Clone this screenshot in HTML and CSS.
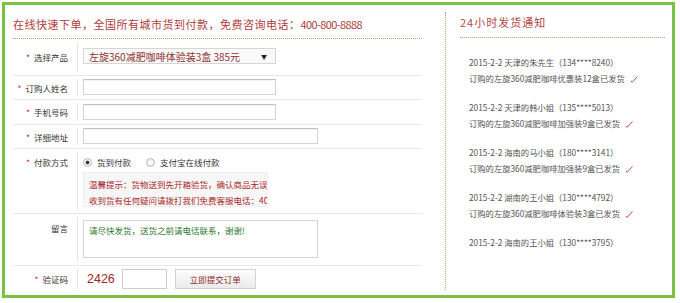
FILE: index.html
```html
<!DOCTYPE html>
<html lang="zh-CN">

<head>
    <meta charset="UTF-8">
    <meta name="viewport" content="width=device-width, initial-scale=1.0">
    <title>在线订购</title>
    <link rel="stylesheet" href="styles.css">
</head>

<body>
    <div class="box">
        <div class="main">
            <div class="main-head">在线快速下单，全国所有城市货到付款，免费咨询电话：<span class="tel">400-800-8888</span></div>
            <form class="order">
                <div class="row">
                    <label class="row-label"><em>*</em>选择产品</label>
                    <div class="field f-select">
                        <div class="select">
                            <span>左旋360减肥咖啡体验装3盒 385元</span>
                            <span class="arrow">▼</span>
                        </div>
                    </div>
                </div>
                <div class="row">
                    <label class="row-label" for="name"><em>*</em>订购人姓名</label>
                    <div class="field f-small">
                        <input type="text" id="name" class="text">
                    </div>
                </div>
                <div class="row">
                    <label class="row-label" for="mobile"><em>*</em>手机号码</label>
                    <div class="field f-mid">
                        <input type="tel" id="mobile" class="text">
                    </div>
                </div>
                <div class="row">
                    <label class="row-label" for="address"><em>*</em>详细地址</label>
                    <div class="field f-small">
                        <input type="text" id="address" class="text wide">
                    </div>
                </div>
                <div class="row row-pay">
                    <label class="row-label"><em>*</em>付款方式</label>
                    <div class="field f-pay">
                        <div class="pay">
                            <input type="radio" class="radio" name="pay" id="cod" checked>
                            <label for="cod">货到付款</label>
                            <input type="radio" class="radio second" name="pay" id="alipay">
                            <label for="alipay">支付宝在线付款</label>
                        </div>
                        <div class="tip">
                            温馨提示：货物送到先开箱验货，确认商品无误后再付款<br>
                            收到货有任何疑问请拨打我们免费客服电话：400-800-8888
                        </div>
                    </div>
                </div>
                <div class="row row-note">
                    <label class="row-label" for="note">留言</label>
                    <div class="field f-note">
                        <textarea id="note" class="note">请尽快发货，送货之前请电话联系，谢谢!</textarea>
                    </div>
                </div>
                <div class="row last">
                    <label class="row-label" for="code"><em>*</em>验证码</label>
                    <div class="field f-code">
                        <span class="code">2426</span>
                        <input type="text" id="code" class="code-input">
                        <button type="button" class="submit">立即提交订单</button>
                    </div>
                </div>
            </form>
        </div>

        <div class="side">
            <div class="side-head">24小时发货通知</div>
            <ul class="notice">
                <li>2015-2-2 天津的朱先生（134****8240）<br>订购的左旋360减肥咖啡优惠装12盒已发货<svg class="ok" width="8" height="7" viewBox="0 0 8 7"><polyline points="1,5 2.2,6.3 7.5,0.5" fill="none" stroke="#c9474a" stroke-width="1"/></svg></li>
                <li>2015-2-2 天津的韩小姐（135****5013）<br>订购的左旋360减肥咖啡加强装9盒已发货<svg class="ok" width="8" height="7" viewBox="0 0 8 7"><polyline points="1,5 2.2,6.3 7.5,0.5" fill="none" stroke="#c9474a" stroke-width="1"/></svg></li>
                <li>2015-2-2 海南的马小姐（180****3141）<br>订购的左旋360减肥咖啡加强装9盒已发货<svg class="ok" width="8" height="7" viewBox="0 0 8 7"><polyline points="1,5 2.2,6.3 7.5,0.5" fill="none" stroke="#c9474a" stroke-width="1"/></svg></li>
                <li>2015-2-2 湖南的王小姐（130****4792）<br>订购的左旋360减肥咖啡体验装3盒已发货<svg class="ok" width="8" height="7" viewBox="0 0 8 7"><polyline points="1,5 2.2,6.3 7.5,0.5" fill="none" stroke="#c9474a" stroke-width="1"/></svg></li>
                <li>2015-2-2 海南的王小姐（130****3795）</li>
            </ul>
        </div>
    </div>
</body>

</html>
```

FILE: styles.css
```css
* {
    box-sizing: border-box;
}

body {
    margin: 0;
    background-color: #fff;
    font-family: "Noto Sans CJK SC", sans-serif;
    color: #333;
}

.box {
    display: flex;
    width: 673px;
    height: 296px;
    margin: 2px 0 0 2px;
    border: 3px solid #7cc242;
}

/* left: order form */
.main {
    width: 440px;
    padding: 0 23px 0 8px;
}

.main-head {
    padding: 9px 0 4px;
    line-height: 20px;
    font-size: 11px;
    letter-spacing: 0.5px;
    color: #b03c3c;
    border-bottom: 1px dotted #a3a86b;
    white-space: nowrap;
}

.tel {
    letter-spacing: -0.6px;
}

.row {
    display: flex;
    border-bottom: 1px solid #e8e8e8;
}

.row.last {
    border-bottom: none;
}

.row-label {
    flex: 0 0 65px;
    display: flex;
    align-items: center;
    justify-content: flex-end;
    margin: 3px 0;
    padding-right: 9px;
    border-right: 1px solid #e3e3e3;
    font-size: 8.5px;
    line-height: 14px;
    white-space: nowrap;
}

.row-label em {
    font-style: normal;
    color: #d0363a;
    margin-right: 4px;
}

.row-pay .row-label {
    align-items: flex-start;
    padding-top: 3px;
}

.row-note .row-label {
    align-items: flex-start;
    padding-top: 4px;
}

.field {
    padding-left: 5px;
}

.f-select {
    padding-top: 9px;
    padding-bottom: 11px;
}

.f-small {
    padding-top: 3px;
    padding-bottom: 4px;
}

.f-mid {
    padding-top: 4px;
    padding-bottom: 4px;
}

.f-pay {
    padding-top: 6px;
    padding-bottom: 6px;
}

.f-note {
    padding-top: 6px;
    padding-bottom: 7px;
}

.f-code {
    display: flex;
    align-items: center;
    padding-top: 3px;
    padding-bottom: 3px;
}

.select {
    display: flex;
    align-items: center;
    justify-content: space-between;
    width: 193px;
    height: 16px;
    padding: 0 8px 0 5px;
    border: 1px solid #d6d6d6;
    background-color: #fafafa;
    font-size: 10px;
    color: #8e3434;
}

.select .arrow {
    font-size: 6px;
    color: #222;
}

.text {
    display: block;
    width: 193px;
    height: 16px;
    padding: 0 4px;
    border: 1px solid #d4d4d4;
    border-top-color: #c2c2c2;
    background-color: #fff;
    box-shadow: inset 0 1px 1px rgba(0, 0, 0, 0.05);
}

.text.wide {
    width: 235px;
}

.pay {
    display: flex;
    align-items: center;
    height: 14px;
    font-size: 8.5px;
}

.radio {
    appearance: none;
    width: 9px;
    height: 9px;
    margin: 0 5px 0 0;
    border: 1px solid #b9b9b9;
    border-radius: 50%;
    background: radial-gradient(circle, #fff 0, #e4e4e4 100%);
}

.radio:checked {
    background: radial-gradient(circle, #3a3a3a 0 1.6px, #f2f2f2 2.2px);
}

.radio.second {
    margin-left: 15px;
}

.tip {
    width: 185px;
    height: 35px;
    margin-top: 3px;
    padding: 3px 0 0 5px;
    border: 1px solid #efefef;
    background-color: #f7f7f7;
    overflow: hidden;
    white-space: nowrap;
    font-size: 8.5px;
    line-height: 16px;
    color: #a8282c;
}

.note {
    display: block;
    width: 235px;
    height: 38px;
    padding: 2px 5px;
    border: 1px solid #d4d4d4;
    resize: none;
    font-family: inherit;
    font-size: 8.5px;
    line-height: 14px;
    color: #2e7a31;
}

.code {
    margin-left: 4px;
    font-family: "Liberation Sans", Arial, sans-serif;
    font-size: 12.5px;
    color: #a3262a;
}

.code-input {
    width: 45px;
    height: 20px;
    margin-left: 7px;
    border: 1px solid #cdcdcd;
}

.submit {
    width: 81px;
    height: 20px;
    margin-left: 8px;
    padding: 0;
    border: 1px solid #d2d2d2;
    background: linear-gradient(#fdfdfd, #ebebeb);
    font-family: inherit;
    font-size: 8.5px;
    color: #8e2a2a;
}

/* right: shipping notices */
.side {
    flex: 1;
    margin: 7px 0 5px;
    padding: 0 7px 0 14px;
    border-left: 1px dotted #a3a86b;
}

.side-head {
    line-height: 20px;
    padding-bottom: 5px;
    border-bottom: 1px dotted #a3a86b;
    font-size: 11px;
    letter-spacing: 1px;
    color: #b24848;
}

.notice {
    list-style: none;
    margin: 16px 0 0;
    padding: 0 0 0 9px;
    font-size: 8.3px;
    line-height: 16px;
    color: #555;
    white-space: nowrap;
}

.notice li {
    margin-bottom: 13px;
}

.ok {
    margin-left: 5px;
    vertical-align: -1px;
}
```
